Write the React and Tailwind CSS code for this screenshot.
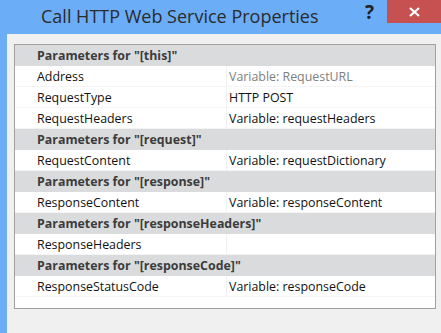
import React from 'react';

const sections = [
  {
    title: '[this]',
    rows: [
      { name: 'Address', value: 'Variable: RequestURL', muted: true },
      { name: 'RequestType', value: 'HTTP POST' },
      { name: 'RequestHeaders', value: 'Variable: requestHeaders' },
    ],
  },
  { title: '[request]', rows: [{ name: 'RequestContent', value: 'Variable: requestDictionary' }] },
  { title: '[response]', rows: [{ name: 'ResponseContent', value: 'Variable: responseContent' }] },
  { title: '[responseHeaders]', rows: [{ name: 'ResponseHeaders', value: '' }] },
  { title: '[responseCode]', rows: [{ name: 'ResponseStatusCode', value: 'Variable: responseCode' }] },
];

export default function App() {
  return (
    <div className="w-[441px] h-[333px] bg-[#6badf6] flex flex-col overflow-hidden" style={{ fontFamily: '"Open Sans", "Noto Sans", sans-serif' }}>
      {/* Title bar */}
      <div className="h-[34px] flex items-start shrink-0">
        <div className="flex-1 pl-[41px] pt-[3px] text-[18px] leading-[26px] text-[#2b2b2b]">Call HTTP Web Service Properties</div>
        <div className="w-[37px] text-[19px] leading-[24px] font-bold text-[#222] pl-[15px]">?</div>
        <div className="w-[54px] h-[23px] bg-[#c75050] flex items-center justify-center">
          <svg width="11" height="10" viewBox="0 0 11 10">
            <path d="M1 1 L10 9 M10 1 L1 9" stroke="#fff" strokeWidth="2.2" />
          </svg>
        </div>
      </div>

      {/* Client area */}
      <div className="flex-1 ml-[7px] bg-[#f0f0f0] pl-[7px] pr-[5px] pt-[10px]">
        <div className="h-[265px] border border-[#a0a0a0] bg-white text-[12.4px] leading-[21px]">
          {sections.map((s) => (
            <div key={s.title}>
              <div className="h-[21px] bg-[#dadbdc] pl-[22px] font-bold text-[#3c3c3c]">Parameters for "{s.title}"</div>
              {s.rows.map((r) => (
                <div key={r.name} className="h-[21px] flex border-b border-[#f4f4f4] text-[#111]">
                  <div className="w-[212px] pl-[22px] border-r border-[#f0f0f0]">{r.name}</div>
                  <div className={'pl-[2px] ' + (r.muted ? 'text-[#808080]' : '')}>{r.value}</div>
                </div>
              ))}
            </div>
          ))}
        </div>
      </div>
    </div>
  );
}
